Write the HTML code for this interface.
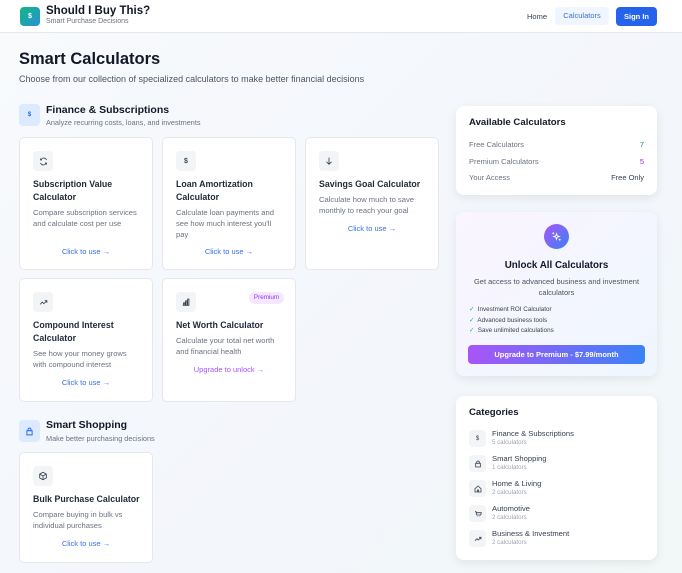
<!DOCTYPE html>
<html><head><meta charset="utf-8"><style>
*{box-sizing:border-box;margin:0;padding:0}
body{width:682px;height:573px;overflow:hidden;font-family:"Liberation Sans",sans-serif;background:linear-gradient(135deg,#f8fafc,#f3f6fb 60%,#f2f8f8);position:relative;color:#1f2937}
.a{position:absolute}
.hdr{left:0;top:0;width:682px;height:33px;background:#fff;border-bottom:1px solid #e5e7eb}
.card{position:absolute;background:#fff;border:1px solid #e5e7eb;border-radius:5px;width:134px}
.ib{position:absolute;left:13px;top:13px;width:20px;height:20px;background:#f3f4f6;border-radius:4px;display:flex;align-items:center;justify-content:center;font-size:7px;color:#374151;font-weight:bold}
.ct{position:absolute;left:13px;top:40px;width:110px;font-size:8.8px;font-weight:bold;color:#1f2937;line-height:12.5px}
.cd{position:absolute;left:13px;width:104px;font-size:7.6px;color:#6b7280;line-height:10.8px}
.lk{position:absolute;left:0;width:100%;text-align:center;font-size:7.5px;color:#3b6fe0}
.side{position:absolute;left:456px;width:201px;background:#fff;border-radius:8px;box-shadow:0 3px 10px rgba(0,0,0,.08)}
.row{position:absolute;left:13px;right:13px;font-size:7.5px;color:#6b7280;display:flex;justify-content:space-between}
.cat{position:absolute;left:13px;height:20px}
.cat .i{position:absolute;left:0;top:0;width:17px;height:17px;background:#f3f4f6;border-radius:4px;display:flex;align-items:center;justify-content:center;font-size:6px;color:#374151}
.cat .n{position:absolute;left:23px;top:-1px;font-size:7.6px;color:#374151;white-space:nowrap}
.cat .s{position:absolute;left:23px;top:9px;font-size:6.2px;color:#9ca3af;white-space:nowrap}
svg{display:block}
</style></head><body>
<div class="a hdr"></div>
<div class="a" style="left:20px;top:7px;width:20px;height:19px;border-radius:4px;background:linear-gradient(135deg,#10b981,#2b8fd8);color:#fff;font-size:7px;font-weight:bold;display:flex;align-items:center;justify-content:center">$</div>
<div class="a" style="left:46px;top:5px;font-size:11.5px;font-weight:bold;color:#111827">Should I Buy This?</div>
<div class="a" style="left:46px;top:18px;font-size:7px;color:#6b7280">Smart Purchase Decisions</div>
<div class="a" style="left:527px;top:12px;font-size:7.5px;color:#374151">Home</div>
<div class="a" style="left:555px;top:7px;width:54px;height:18px;background:#eff6ff;border-radius:4px;font-size:7.5px;color:#3b6fe0;text-align:center;line-height:18px">Calculators</div>
<div class="a" style="left:616px;top:7px;width:41px;height:19px;background:#2563eb;border-radius:4px;font-size:7.5px;color:#fff;font-weight:bold;text-align:center;line-height:19px">Sign In</div>

<div class="a" style="left:19px;top:50px;font-size:16.5px;font-weight:bold;color:#111827">Smart Calculators</div>
<div class="a" style="left:19px;top:74px;font-size:9px;color:#4b5563">Choose from our collection of specialized calculators to make better financial decisions</div>

<div class="a" style="left:19px;top:104px;width:21px;height:22px;background:#dbeafe;border-radius:4px;color:#2563eb;font-size:6px;font-weight:bold;display:flex;align-items:center;justify-content:center">$</div>
<div class="a" style="left:46px;top:104px;font-size:10.5px;font-weight:bold;color:#111827">Finance &amp; Subscriptions</div>
<div class="a" style="left:46px;top:118px;font-size:7.3px;color:#6b7280">Analyze recurring costs, loans, and investments</div>

<div class="card" style="left:19px;top:137px;height:133px">
 <div class="ib"><svg width="9" height="9" viewBox="0 0 24 24" fill="none" stroke="#374151" stroke-width="2.2"><path d="M20 8a8 8 0 0 0-14-2L4 8M4 4v4h4M4 16a8 8 0 0 0 14 2l2-2M20 20v-4h-4"/></svg></div>
 <div class="ct">Subscription Value Calculator</div>
 <div class="cd" style="top:70px">Compare subscription services and calculate cost per use</div>
 <div class="lk" style="top:109px">Click to use →</div>
</div>
<div class="card" style="left:162px;top:137px;height:133px">
 <div class="ib">$</div>
 <div class="ct">Loan Amortization Calculator</div>
 <div class="cd" style="top:70px">Calculate loan payments and see how much interest you'll pay</div>
 <div class="lk" style="top:109px">Click to use →</div>
</div>
<div class="card" style="left:305px;top:137px;height:133px">
 <div class="ib"><svg width="10" height="10" viewBox="0 0 24 24" fill="none" stroke="#374151" stroke-width="2"><path d="M12 4v16M6 14l6 6 6-6"/></svg></div>
 <div class="ct">Savings Goal Calculator</div>
 <div class="cd" style="top:57px">Calculate how much to save monthly to reach your goal</div>
 <div class="lk" style="top:86px">Click to use →</div>
</div>
<div class="card" style="left:19px;top:278px;height:124px">
 <div class="ib"><svg width="9" height="9" viewBox="0 0 24 24" fill="none" stroke="#374151" stroke-width="2.2"><path d="M3 17l6-6 4 4 8-8M15 7h6v6"/></svg></div>
 <div class="ct">Compound Interest Calculator</div>
 <div class="cd" style="top:70px">See how your money grows with compound interest</div>
 <div class="lk" style="top:99px">Click to use →</div>
</div>
<div class="card" style="left:162px;top:278px;height:124px">
 <div class="ib"><svg width="10" height="10" viewBox="0 0 24 24" fill="none" stroke="#374151" stroke-width="2"><path d="M4 20h16M6 20v-6h3v6M11 20V9h3v11M16 20V5h3v15"/></svg></div>
 <div class="a" style="left:86px;top:13px;width:35px;height:12px;background:#f3e8ff;border-radius:6px;color:#9333ea;font-size:6.3px;text-align:center;line-height:12px">Premium</div>
 <div class="ct">Net Worth Calculator</div>
 <div class="cd" style="top:57px">Calculate your total net worth and financial health</div>
 <div class="lk" style="top:86px;color:#a855f7">Upgrade to unlock →</div>
</div>

<div class="a" style="left:19px;top:420px;width:21px;height:22px;background:#dbeafe;border-radius:4px;display:flex;align-items:center;justify-content:center"><svg width="9" height="9" viewBox="0 0 24 24" fill="none" stroke="#2563eb" stroke-width="2.4"><path d="M5 10h14v11H5zM8 10V7a4 4 0 0 1 8 0v3"/></svg></div>
<div class="a" style="left:46px;top:419px;font-size:10.5px;font-weight:bold;color:#111827">Smart Shopping</div>
<div class="a" style="left:46px;top:434px;font-size:7.3px;color:#6b7280">Make better purchasing decisions</div>
<div class="card" style="left:19px;top:452px;height:111px">
 <div class="ib"><svg width="10" height="10" viewBox="0 0 24 24" fill="none" stroke="#374151" stroke-width="2"><path d="M12 3l8 4.5v9L12 21l-8-4.5v-9zM4 7.5l8 4.5 8-4.5M12 12v9"/></svg></div>
 <div class="ct">Bulk Purchase Calculator</div>
 <div class="cd" style="top:57px">Compare buying in bulk vs individual purchases</div>
 <div class="lk" style="top:86px">Click to use →</div>
</div>

<div class="side" style="top:106px;height:89px">
 <div class="a" style="left:13px;top:11px;font-size:9.6px;font-weight:bold;color:#111827">Available Calculators</div>
 <div class="row" style="top:34px"><span>Free Calculators</span><span style="color:#059669">7</span></div>
 <div class="row" style="top:51px"><span>Premium Calculators</span><span style="color:#9333ea">5</span></div>
 <div class="row" style="top:67px"><span>Your Access</span><span style="color:#374151">Free Only</span></div>
</div>

<div class="side" style="top:212px;height:164px;background:linear-gradient(135deg,#faf5ff,#eff6ff)">
 <div class="a" style="left:88px;top:12px;width:25px;height:25px;border-radius:50%;background:linear-gradient(135deg,#a855f7,#3b82f6);display:flex;align-items:center;justify-content:center"><svg width="11" height="11" viewBox="0 0 24 24" fill="none" stroke="#fff" stroke-width="2"><path d="M12 6l1.5 4.5L18 12l-4.5 1.5L12 18l-1.5-4.5L6 12l4.5-1.5zM5 3v4M3 5h4M19 17v4M17 19h4"/></svg></div>
 <div class="a" style="left:0;width:201px;top:48px;text-align:center;font-size:9.8px;font-weight:bold;color:#111827">Unlock All Calculators</div>
 <div class="a" style="left:10px;width:181px;top:65px;text-align:center;font-size:7.5px;color:#4b5563;line-height:10.5px">Get access to advanced business and investment calculators</div>
 <div class="a" style="left:13px;top:93px;font-size:6.3px;color:#374151;line-height:10.5px"><span style="color:#10b981">✓</span>&nbsp; Investment ROI Calculator<br><span style="color:#10b981">✓</span>&nbsp; Advanced business tools<br><span style="color:#10b981">✓</span>&nbsp; Save unlimited calculations</div>
 <div class="a" style="left:12px;top:133px;width:177px;height:19px;border-radius:4px;background:linear-gradient(90deg,#a855f7,#3b82f6);color:#fff;font-size:7.5px;font-weight:bold;text-align:center;line-height:19px">Upgrade to Premium - $7.99/month</div>
</div>

<div class="side" style="top:396px;height:164px">
 <div class="a" style="left:13px;top:11px;font-size:9.6px;font-weight:bold;color:#111827">Categories</div>
 <div class="cat" style="top:34px"><div class="i">$</div><div class="n">Finance &amp; Subscriptions</div><div class="s">5 calculators</div></div>
 <div class="cat" style="top:59px"><div class="i"><svg width="8" height="8" viewBox="0 0 24 24" fill="none" stroke="#374151" stroke-width="2.4"><path d="M5 10h14v11H5zM8 10V7a4 4 0 0 1 8 0v3"/></svg></div><div class="n">Smart Shopping</div><div class="s">1 calculators</div></div>
 <div class="cat" style="top:84px"><div class="i"><svg width="8" height="8" viewBox="0 0 24 24" fill="none" stroke="#374151" stroke-width="2.4"><path d="M3 11l9-8 9 8v10H3zM10 21v-6h4v6"/></svg></div><div class="n">Home &amp; Living</div><div class="s">2 calculators</div></div>
 <div class="cat" style="top:109px"><div class="i"><svg width="8" height="8" viewBox="0 0 24 24" fill="none" stroke="#374151" stroke-width="2.4"><path d="M3 5h3l2 10h12l2-7H7M9 20h1M17 20h1"/></svg></div><div class="n">Automotive</div><div class="s">2 calculators</div></div>
 <div class="cat" style="top:134px"><div class="i"><svg width="8" height="8" viewBox="0 0 24 24" fill="none" stroke="#374151" stroke-width="2.4"><path d="M3 17l6-6 4 4 8-8M15 7h6v6"/></svg></div><div class="n">Business &amp; Investment</div><div class="s">2 calculators</div></div>
</div>
</body></html>
